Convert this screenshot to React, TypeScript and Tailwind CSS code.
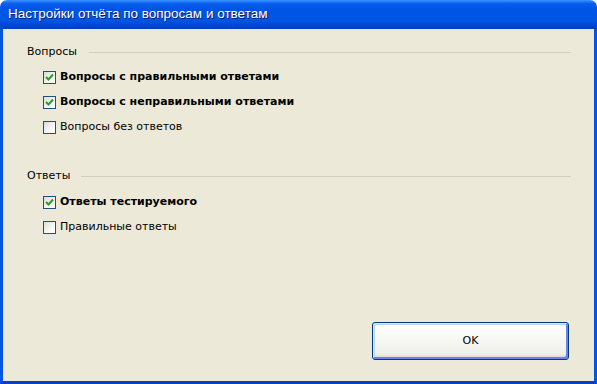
import React, { useState } from "react";

const font = { fontFamily: '"DejaVu Sans", "Liberation Sans", sans-serif' };

function XpCheck({ label, checked, bold, onToggle }: { label: string; checked: boolean; bold?: boolean; onToggle: () => void }) {
  return (
    <label className="flex h-[25px] items-center cursor-default" onClick={onToggle}>
      <span className="flex h-[13px] w-[13px] items-center justify-center border border-[#1c5180] bg-[linear-gradient(135deg,#dcdcd5,#ffffff_80%)]">
        {checked && (
          <svg width="9" height="9" viewBox="0 0 9 9">
            <path d="M1 4 L3.5 6.5 L8 1.5" fill="none" stroke="#21a121" strokeWidth="2" />
          </svg>
        )}
      </span>
      <span className={"ml-[4px] text-[11px] text-black " + (bold ? "font-bold" : "")}>{label}</span>
    </label>
  );
}

function GroupHeader({ title, gap }: { title: string; gap: string }) {
  return (
    <div className="flex h-[14px] items-center">
      <span className="text-[11px] text-black">{title}</span>
      <div className={"h-px flex-1 bg-[#d0d0bf] " + gap} />
    </div>
  );
}

export default function App() {
  const [opts, setOpts] = useState({ right: true, wrong: true, none: false, answers: true, correct: false });
  const toggle = (k: keyof typeof opts) => setOpts({ ...opts, [k]: !opts[k] });

  return (
    <div className="flex h-[384px] w-[597px] flex-col" style={font}>
      <div className="flex h-[29px] items-center rounded-t-[7px] bg-[linear-gradient(180deg,#3d95ff_0%,#0a5ff0_12%,#0054e3_30%,#0055e5_70%,#0044d0_90%,#003cbf_100%)] pl-[8px]">
        <span className="text-[13.5px] text-white [font-family:'Liberation_Sans',sans-serif] [text-shadow:1px_1px_0_#0a1e6e]">
          Настройки отчёта по вопросам и ответам
        </span>
      </div>
      <div className="flex flex-1 flex-col border-x-[3px] border-b-[3px] border-x-[#0055e5] border-b-[#0041c8] bg-[#ece9d8] pl-[24px] pr-[23px] pt-[16px]">
        <GroupHeader title="Вопросы" gap="ml-[12px]" />
        <div className="mt-[6px] pl-[16px]">
          <XpCheck label="Вопросы с правильными ответами" checked={opts.right} bold={opts.right} onToggle={() => toggle("right")} />
          <XpCheck label="Вопросы с неправильными ответами" checked={opts.wrong} bold={opts.wrong} onToggle={() => toggle("wrong")} />
          <XpCheck label="Вопросы без ответов" checked={opts.none} bold={opts.none} onToggle={() => toggle("none")} />
        </div>
        <div className="mt-[29px]">
          <GroupHeader title="Ответы" gap="ml-[11px]" />
        </div>
        <div className="mt-[7px] pl-[16px]">
          <XpCheck label="Ответы тестируемого" checked={opts.answers} bold={opts.answers} onToggle={() => toggle("answers")} />
          <XpCheck label="Правильные ответы" checked={opts.correct} bold={opts.correct} onToggle={() => toggle("correct")} />
        </div>
        <div className="mt-auto mb-[21px] flex justify-end pr-[2px]">
          <button className="h-[38px] w-[197px] rounded-[3px] border border-[#003c74] bg-[linear-gradient(180deg,#ffffff,#f0f0ea_85%,#d6d0c5)] text-[11px] text-black shadow-[inset_1px_1px_0_#cee7ff,inset_-2px_-2px_0_#6982ee,inset_2px_2px_0_#bcd4f6]">
            OK
          </button>
        </div>
      </div>
    </div>
  );
}
